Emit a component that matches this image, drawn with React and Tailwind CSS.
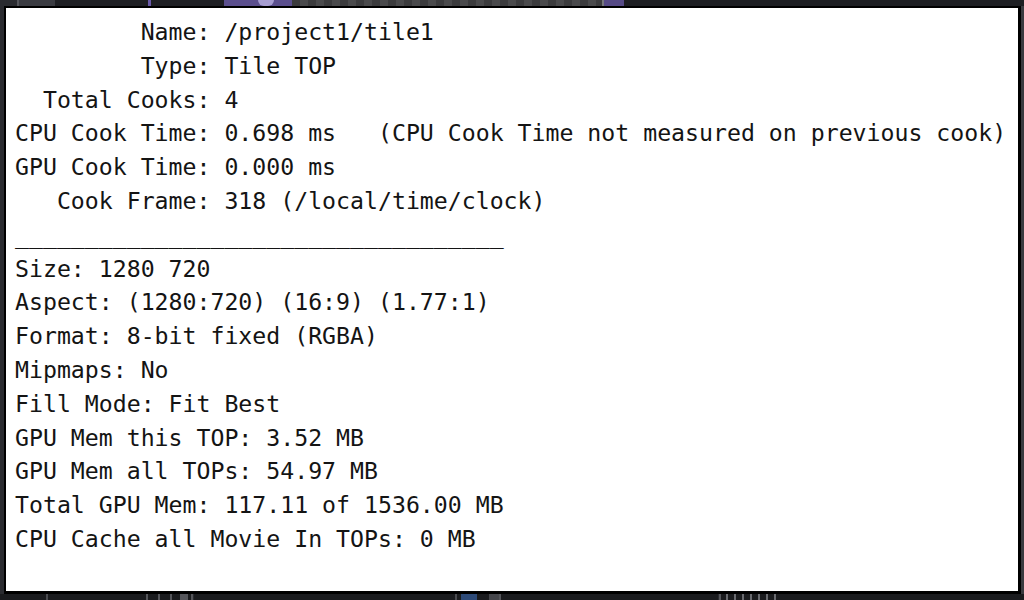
import React from "react";

const lines = [
  "         Name: /project1/tile1",
  "         Type: Tile TOP",
  "  Total Cooks: 4",
  "CPU Cook Time: 0.698 ms   (CPU Cook Time not measured on previous cook)",
  "GPU Cook Time: 0.000 ms",
  "   Cook Frame: 318 (/local/time/clock)",
];

const details = [
  "Size: 1280 720",
  "Aspect: (1280:720) (16:9) (1.77:1)",
  "Format: 8-bit fixed (RGBA)",
  "Mipmaps: No",
  "Fill Mode: Fit Best",
  "GPU Mem this TOP: 3.52 MB",
  "GPU Mem all TOPs: 54.97 MB",
  "Total GPU Mem: 117.11 of 1536.00 MB",
  "CPU Cache all Movie In TOPs: 0 MB",
];

function TopStrip() {
  return (
    <div className="flex h-[6px] shrink-0 items-stretch">
      <div className="w-[17px] bg-[#2a2b30]" />
      <div className="w-[2px] bg-[#55565c]" />
      <div className="w-[36px] bg-[#3a3b41]" />
      <div className="w-[93px] bg-[#1e1f23]" />
      <div className="w-[3px] bg-[#6a5aa8]" />
      <div className="w-[73px] bg-[#1e1f23]" />
      <div className="flex w-[68px] items-stretch bg-[#5b4f8e]">
        <div className="w-[34px]" />
        <div className="w-[16px] rounded-b-full bg-[#a79ed2]" />
      </div>
      <div className="w-[310px] bg-[repeating-linear-gradient(90deg,#3b3b3d_0px,#3b3b3d_8px,#4a4a4c_8px,#4a4a4c_16px)]" />
      <div className="w-[2px] bg-[#77787c]" />
      <div className="w-[20px] bg-[#564a86]" />
      <div className="flex-1 bg-[#1d1e22]" />
    </div>
  );
}

function BottomStrip() {
  return (
    <div className="flex h-[6px] shrink-0 items-stretch bg-[#1a1b1e]">
      <div className="w-[46px]" />
      <div className="w-[2px] bg-[#4a4b50]" />
      <div className="w-[98px]" />
      <div className="w-[2px] bg-[#55565b]" />
      <div className="w-[10px]" />
      <div className="w-[2px] bg-[#55565b]" />
      <div className="w-[10px]" />
      <div className="w-[2px] bg-[#55565b]" />
      <div className="w-[8px]" />
      <div className="w-[8px] bg-[#55565b]" />
      <div className="w-[3px]" />
      <div className="w-[2px] bg-[#55565b]" />
      <div className="w-[262px] border-l border-[#2a2b30]" />
      <div className="w-[2px] bg-[#4a4b50]" />
      <div className="w-[4px]" />
      <div className="w-[16px] bg-[#2d4a78]" />
      <div className="w-[12px]" />
      <div className="w-[10px] bg-[#45464b]" />
      <div className="w-[2px] bg-[#55565b]" />
      <div className="w-[218px] border-r border-[#2a2b30]" />
      <div className="w-[2px] bg-[#55565b]" />
      <div className="w-[5px]" />
      <div className="w-[50px] bg-[repeating-linear-gradient(90deg,#6a6b70_0px,#6a6b70_2px,transparent_2px,transparent_8px)]" />
      <div className="flex-1" />
    </div>
  );
}

export default function App() {
  return (
    <div className="flex h-[600px] w-[1024px] flex-col overflow-hidden bg-[#1c1d21]">
      <TopStrip />
      <div className="flex flex-1">
        <div className="w-[4px] bg-[#2a2b30]" />
        <div className="flex-1 border-t-2 border-l-2 border-r-[3px] border-b-[3px] border-black bg-white pl-[9px] pt-[7px] font-['DejaVu_Sans_Mono',monospace] text-[23.2px] leading-[33.8px] text-[#141414]">
          {lines.map((line) => (
            <div key={line} className="whitespace-pre">
              {line}
            </div>
          ))}
          <div className="whitespace-pre">{"_".repeat(35)}</div>
          {details.map((line) => (
            <div key={line} className="whitespace-pre">
              {line}
            </div>
          ))}
        </div>
        <div className="w-[3px] bg-[#3a3b40]" />
      </div>
      <BottomStrip />
    </div>
  );
}
